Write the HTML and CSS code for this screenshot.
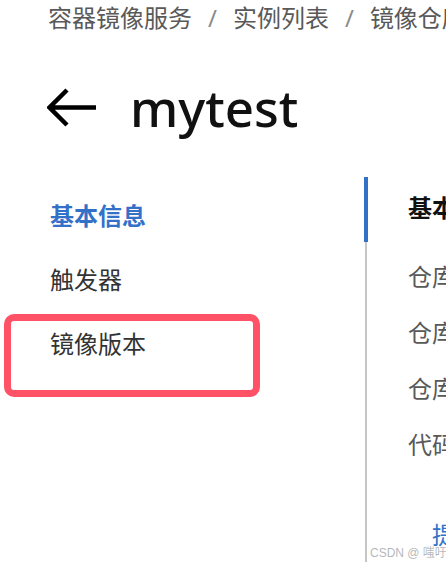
FILE: index.html
```html
<!DOCTYPE html>
<html lang="zh-CN">
<head>
  <meta charset="UTF-8">
  <title>mytest - 镜像仓库</title>
  <link rel="stylesheet" href="styles.css">
</head>
<body>

  <div class="page">
    <div class="breadcrumb">
      <span>容器镜像服务</span>
      <span class="sep">/</span>
      <span>实例列表</span>
      <span class="sep">/</span>
      <span>镜像仓库</span>
    </div>

    <div class="title-row">
      <svg class="back" width="51" height="40" viewBox="0 0 51 40">
        <path d="M20 2 L2.5 19.5 L20 37 M2.5 19.5 H49" fill="none" stroke="#000" stroke-width="4.5"/>
      </svg>
      <h1 class="title">mytest</h1>
    </div>

    <div class="main">
      <div class="side-nav">
        <div class="nav-item active">基本信息</div>
        <div class="nav-item">触发器</div>
        <div class="nav-item">镜像版本</div>
        <div class="mark"></div>
      </div>

      <div class="content">
        <div class="section-title">基本信息</div>
        <div class="info-row">仓库名称</div>
        <div class="info-row">仓库地域</div>
        <div class="info-row">仓库类型</div>
        <div class="info-row">代码源</div>
        <div class="link">提交</div>
      </div>
    </div>
  </div>

  <div class="watermark">CSDN @ 嗤吁敏</div>

</body>
</html>
```

FILE: styles.css
```css
body {
  margin: 0;
  background: #fff;
  font-family: "Noto Sans", "Noto Sans CJK SC", sans-serif;
  color: #222;
  width: 446px;
  height: 562px;
  overflow: hidden;
  position: relative;
}

.page {
  width: 446px;
  overflow: hidden;
}

.breadcrumb {
  padding-left: 48px;
  height: 36px;
  line-height: 36px;
  font-size: 24px;
  color: #595959;
  white-space: nowrap;
  display: flex;
}

.breadcrumb .sep {
  margin: 0 16px;
  color: #8c8c8c;
}

.title-row {
  margin-top: 36px;
  height: 72px;
  padding-left: 47px;
  display: flex;
  align-items: center;
  gap: 32px;
}

.back {
  flex-shrink: 0;
}

.title {
  margin: 0;
  font-size: 51px;
  font-weight: 500;
  color: #111;
  line-height: 72px;
  margin-top: -2px;
}

.main {
  margin-top: 33px;
  display: flex;
  height: 400px;
}

.side-nav {
  width: 365px;
  flex-shrink: 0;
  padding-top: 7px;
  position: relative;
}

.nav-item {
  padding-left: 50px;
  height: 64px;
  line-height: 64px;
  font-size: 24px;
  color: #333;
}

.nav-item.active {
  color: #3371c9;
  font-weight: 700;
}

.mark {
  position: absolute;
  left: 4px;
  top: 137px;
  width: 256px;
  height: 83px;
  box-sizing: border-box;
  border: 7px solid #ff5266;
  border-radius: 10px;
}

.content {
  border-left: 2px solid #c6c6c6;
  padding-left: 41px;
  padding-top: 13px;
  position: relative;
  white-space: nowrap;
  flex-shrink: 0;
}

.content::before {
  content: "";
  position: absolute;
  left: -3px;
  top: 0;
  width: 4px;
  height: 65px;
  background: #3371c9;
}

.section-title {
  font-size: 24px;
  font-weight: 700;
  line-height: 36px;
  color: #111;
}

.info-row {
  font-size: 24px;
  height: 56px;
  line-height: 56px;
  color: #595959;
}

.section-title + .info-row {
  margin-top: 23px;
}

.link {
  margin-top: 44px;
  font-size: 24px;
  line-height: 36px;
  color: #3371c9;
  padding-left: 24px;
}

.watermark {
  position: absolute;
  left: 370px;
  top: 543px;
  font-family: "Liberation Sans", "Noto Sans CJK SC", sans-serif;
  font-size: 12px;
  color: rgba(120, 120, 120, 0.55);
  white-space: nowrap;
}
```
